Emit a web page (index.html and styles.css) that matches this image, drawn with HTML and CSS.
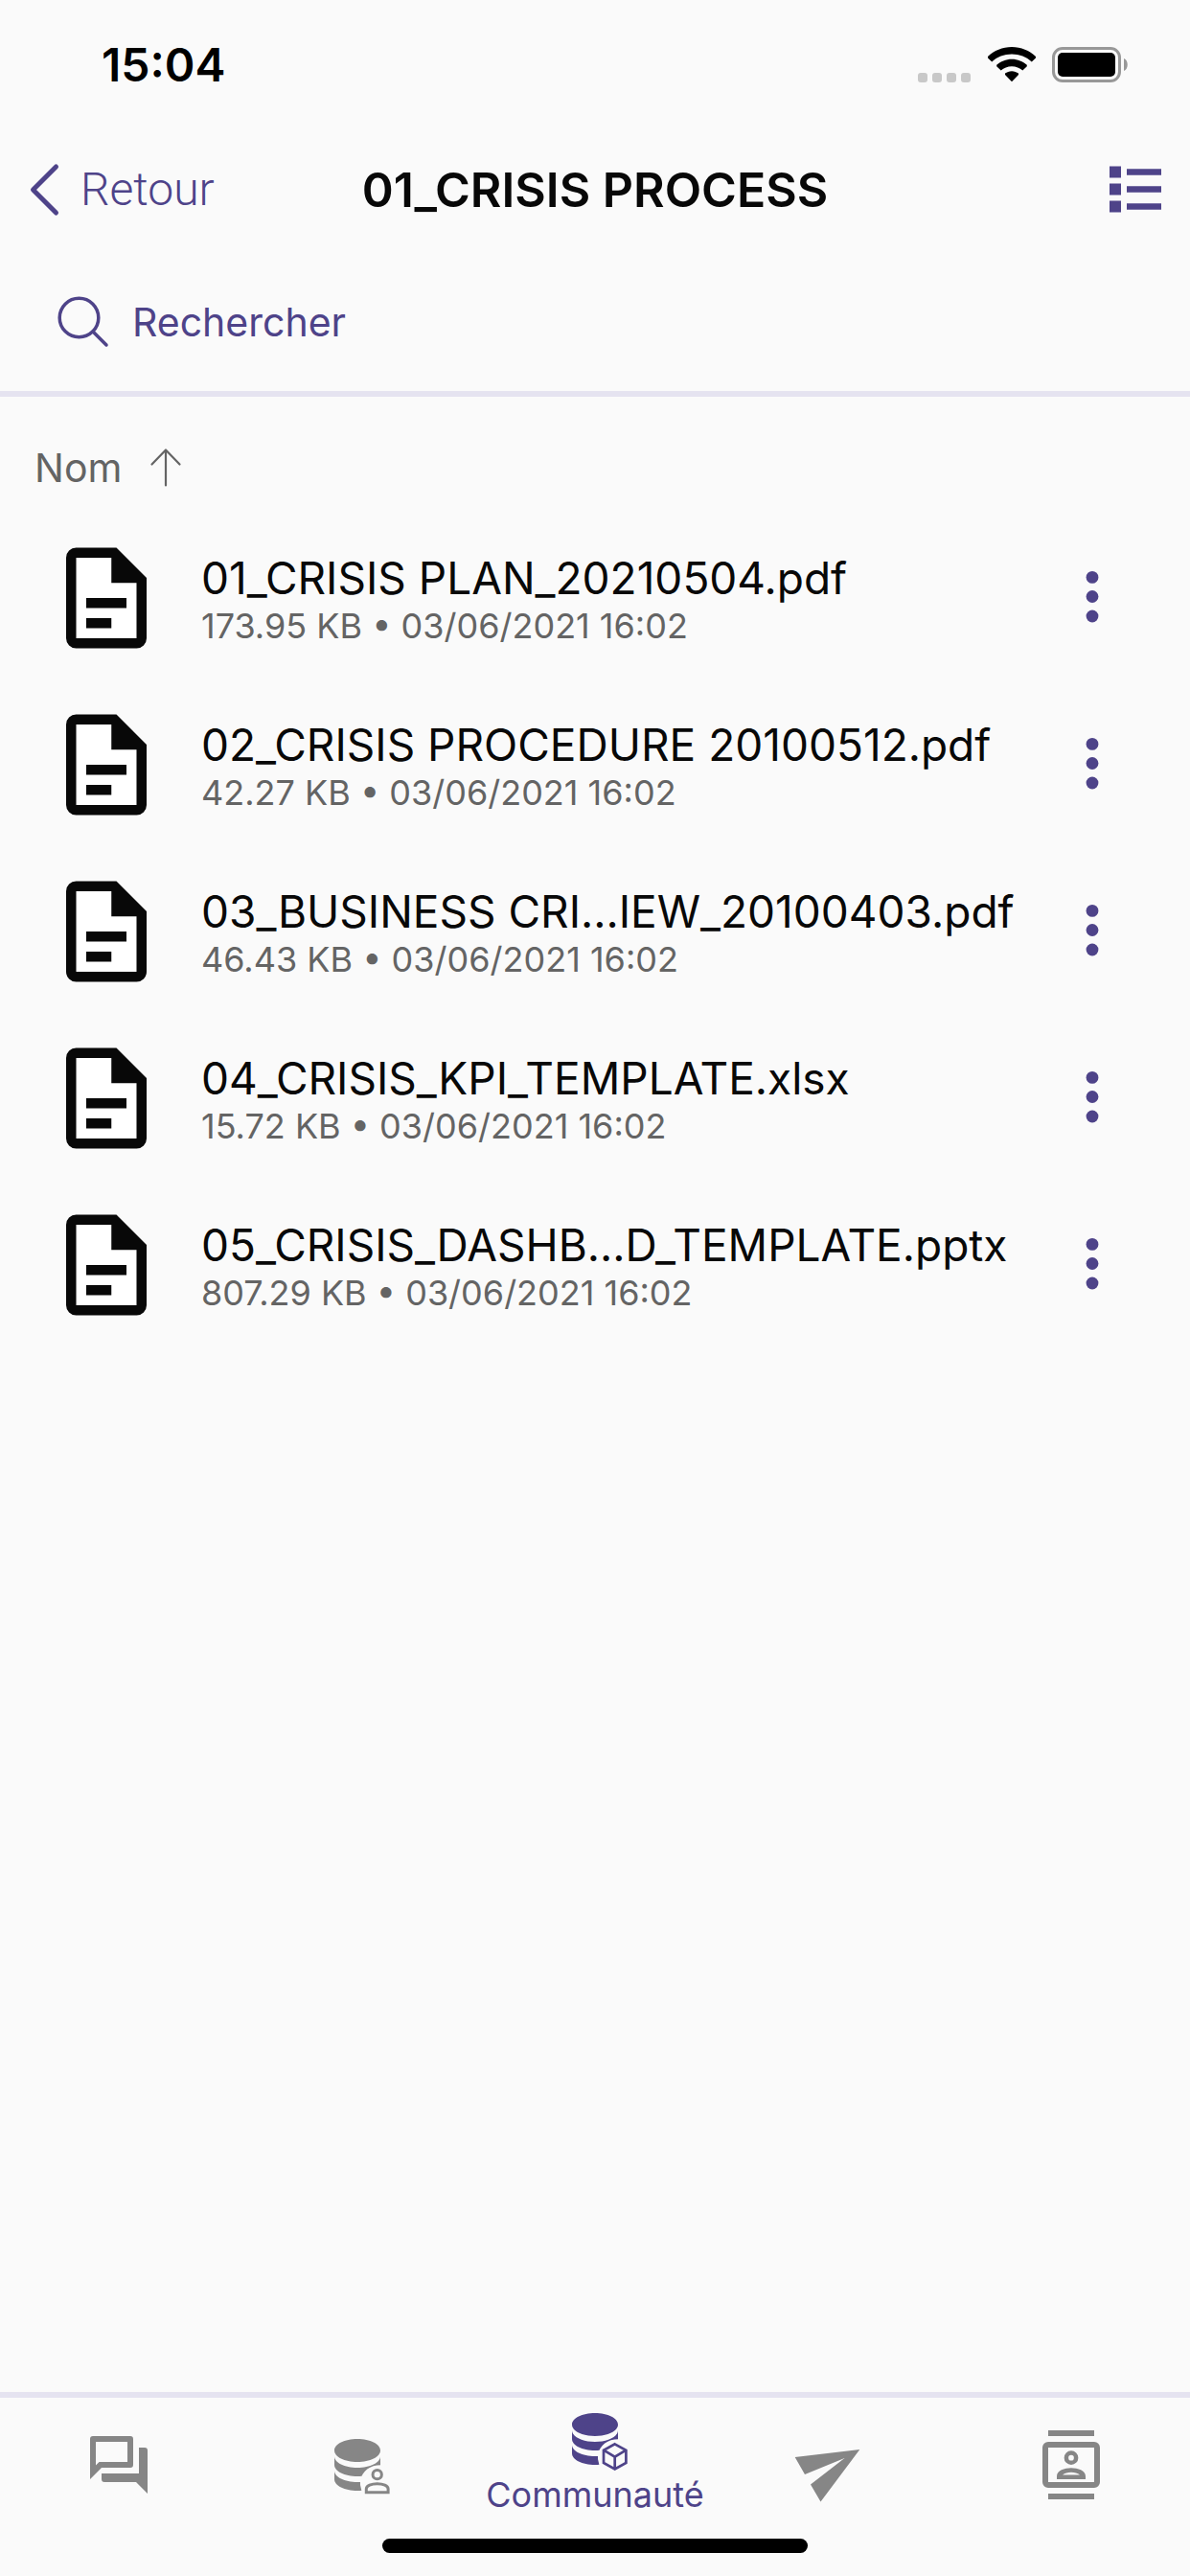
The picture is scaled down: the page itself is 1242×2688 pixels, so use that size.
FILE: index.html
```html
<!DOCTYPE html>
<html lang="fr">
<head>
<meta charset="utf-8">
<meta name="viewport" content="width=device-width, initial-scale=1">
<title>01_CRISIS PROCESS</title>
<link rel="stylesheet" href="styles.css">
</head>
<body>
<svg class="defs" aria-hidden="true">
  <symbol id="file" viewBox="0 0 24 24">
    <path fill="#fff" d="M6 4h8l4 4v12H6z"/>
    <path fill-rule="evenodd" d="M6 2A2 2 0 0 0 4 4V20A2 2 0 0 0 6 22H18A2 2 0 0 0 20 20V8L14 2ZM6 4H13V9H18V20H6ZM8 12V14H16V12ZM8 16V18H13V16Z"/>
  </symbol>
  <symbol id="more" viewBox="0 0 14 56">
    <circle cx="7" cy="6.400" r="6.400"/><circle cx="7" cy="26.500" r="6.400"/><circle cx="7" cy="47" r="6.400"/>
  </symbol>
  <symbol id="database" viewBox="0 0 24 24">
    <path d="M12 3C7.58 3 4 4.79 4 7s3.58 4 8 4 8-1.79 8-4-3.58-4-8-4M4 9v3c0 2.21 3.58 4 8 4s8-1.79 8-4V9c0 2.21-3.58 4-8 4s-8-1.79-8-4m0 5v3c0 2.21 3.58 4 8 4s8-1.79 8-4v-3c0 2.21-3.58 4-8 4s-8-1.79-8-4Z"/>
    <path fill="#fafafa" d="M20.5 12.1C16.5 12 13.7 14 13 17.6V19l.7 3H22V12.1Z"/>
  </symbol>
</svg>

<div class="status">
  <time>15:04</time>
  <div class="status-icons">
    <svg width="56" height="10" viewBox="0 0 56 10" class="signal" aria-hidden="true"><rect width="10" height="10" rx="3"/><rect x="15" width="10" height="10" rx="3"/><rect x="30" width="10" height="10" rx="3"/><rect x="45" width="10" height="10" rx="3"/></svg>
    <svg width="50" height="37" viewBox="0 0 50 37" aria-hidden="true"><path d="M25 0C15.300 0 6.500 3.800 0 10l0 1.400 4.200 4.200C9.600 10.300 17 7.600 25 7.600s15.400 2.700 20.800 8L50 11.400V10C43.500 3.800 34.700 0 25 0ZM25 12.700c-6.100 0-11.600 2.300-15.800 6.100v1.400l4.500 4.400c3-2.700 6.900-4.400 11.300-4.400s8.300 1.700 11.300 4.400l4.500-4.400v-1.400C36.600 15 31.100 12.700 25 12.700ZM25 25.200c-2.700 0-5.100.9-7 2.400v1.300l7 7.400 7-7.400v-1.300c-1.900-1.500-4.300-2.400-7-2.400Z"/></svg>
    <svg width="80" height="37" viewBox="0 0 80 37" aria-hidden="true"><rect x="1.500" y="1.500" width="69" height="34" rx="9.500" fill="none" stroke="#989898" stroke-width="3"/><rect x="6" y="6" width="60" height="25" rx="5"/><path fill="#989898" d="M75 12c5 2 5 11 0 13Z"/></svg>
  </div>
</div>

<header class="topbar">
  <a class="back" href="#"><svg width="32" height="54" viewBox="0 0 32 54" aria-hidden="true"><path fill="none" stroke="currentColor" stroke-width="5" stroke-linecap="round" stroke-linejoin="round" d="M28.500 3 4.500 27l24 24"/></svg>Retour</a>
  <h1>01_CRISIS PROCESS</h1>
  <button class="view" aria-label="Affichage"><svg width="54" height="50" viewBox="0 0 54 50" aria-hidden="true"><path d="M0 .5h12v12H0zM0 18.500h12v12H0zM0 36.500h12v12H0zM18 3.300h36v6.400H18zM18 21.300h36v6.400H18zM18 39.300h36v6.400H18z"/></svg></button>
</header>

<label class="search">
  <svg width="54" height="54" viewBox="0 0 54 54" aria-hidden="true"><g fill="none" stroke="currentColor" stroke-width="3.500" stroke-linecap="round"><circle cx="22.500" cy="22.500" r="20.300"/><path d="M37 37 51 51"/></g></svg>
  <input type="search" placeholder="Rechercher" aria-label="Rechercher">
</label>

<main>
  <button class="sort">Nom<svg width="32" height="40" viewBox="0 0 32 40" aria-hidden="true"><path fill="none" stroke="currentColor" stroke-width="2.200" stroke-linecap="round" stroke-linejoin="round" d="M16 38.500V2M1.500 16.500 16 1.500l14.500 15"/></svg></button>
  <ul class="files">
    <li><svg class="file-icon" aria-hidden="true"><use href="#file"/></svg><div class="info"><span class="name">01_CRISIS PLAN_20210504.pdf</span><span class="meta">173.95 KB • 03/06/2021 16:02</span></div><button class="more" aria-label="Options"><svg width="14" height="56"><use href="#more"/></svg></button></li>
    <li><svg class="file-icon" aria-hidden="true"><use href="#file"/></svg><div class="info"><span class="name">02_CRISIS PROCEDURE 20100512.pdf</span><span class="meta">42.27 KB • 03/06/2021 16:02</span></div><button class="more" aria-label="Options"><svg width="14" height="56"><use href="#more"/></svg></button></li>
    <li><svg class="file-icon" aria-hidden="true"><use href="#file"/></svg><div class="info"><span class="name">03_BUSINESS CRI…IEW_20100403.pdf</span><span class="meta">46.43 KB • 03/06/2021 16:02</span></div><button class="more" aria-label="Options"><svg width="14" height="56"><use href="#more"/></svg></button></li>
    <li><svg class="file-icon" aria-hidden="true"><use href="#file"/></svg><div class="info"><span class="name">04_CRISIS_KPI_TEMPLATE.xlsx</span><span class="meta">15.72 KB • 03/06/2021 16:02</span></div><button class="more" aria-label="Options"><svg width="14" height="56"><use href="#more"/></svg></button></li>
    <li><svg class="file-icon" aria-hidden="true"><use href="#file"/></svg><div class="info"><span class="name">05_CRISIS_DASHB…D_TEMPLATE.pptx</span><span class="meta">807.29 KB • 03/06/2021 16:02</span></div><button class="more" aria-label="Options"><svg width="14" height="56"><use href="#more"/></svg></button></li>
  </ul>
</main>

<footer>
  <nav>
    <a href="#" aria-label="Messages"><svg viewBox="0 0 24 24"><path d="M15 4v7H5.170L4 12.170V4h11m1-2H3a1 1 0 0 0-1 1v14l4-4h10a1 1 0 0 0 1-1V3a1 1 0 0 0-1-1m5 4h-2v9H6v2a1 1 0 0 0 1 1h11l4 4V7a1 1 0 0 0-1-1Z"/></svg></a>
    <a href="#" aria-label="Personnel"><svg viewBox="0 0 24 24"><use href="#database"/><g fill="none" stroke="currentColor" stroke-width="1"><circle cx="18.900" cy="15.400" r="1.550"/><path d="M15.100 21.600v-1.300c0-1.100 1.800-1.750 3.800-1.750s3.800.65 3.800 1.750v1.300Z"/></g></svg></a>
    <a href="#" class="active" aria-current="page"><svg viewBox="0 0 24 24"><use href="#database"/><path fill="none" stroke="currentColor" stroke-width=".9" stroke-linejoin="miter" d="M18.900 13.800l3.900 2.100v4.400l-3.900 2.200-3.900-2.200v-4.400ZM15 15.900l3.900 2.300 3.900-2.300M18.900 18.200v4.300"/></svg><span>Communauté</span></a>
    <a href="#" aria-label="Envois"><svg viewBox="0 0 72 72"><path d="M-3.300 28 64.300 20 23.500 74.500 13 56.500 48.500 29 7 46Z"/></svg></a>
    <a href="#" aria-label="Contacts"><svg viewBox="0 0 24 24"><path fill-rule="evenodd" d="M4 0h16v2H4zM4 22h16v2H4zM4 4h16a2 2 0 0 1 2 2v12a2 2 0 0 1-2 2H4a2 2 0 0 1-2-2V6a2 2 0 0 1 2-2Zm0 2v12h16V6ZM12 7.100a2.450 2.450 0 1 1 0 4.900 2.450 2.450 0 0 1 0-4.900Zm0 1.500a.95.95 0 1 0 0 1.900.95.950 0 0 0 0-1.900ZM7 17v-1c0-2 2.700-2.900 5-2.900s5 .9 5 2.900v1Zm2-1.500h6c-.7-.6-1.900-.9-3-.9s-2.300.3-3 .9Z"/></svg></a>
  </nav>
  <div class="home"></div>
</footer>
</body>
</html>
```

FILE: styles.css
```css
* { box-sizing: border-box; }

body {
  margin: 0;
  min-height: 100vh;
  display: flex;
  flex-direction: column;
  background: #fafafa;
  color: #080808;
  font-family: Inter, "Liberation Sans", sans-serif;
}

svg { display: block; flex: none; fill: currentColor; overflow: visible; }
button { border: 0; padding: 0; background: none; font: inherit; color: inherit; }
a { color: inherit; text-decoration: none; }
.defs { position: absolute; width: 0; height: 0; }

.status {
  display: flex;
  justify-content: space-between;
  padding: 36px 64px 32px 106px;
  color: #000;
}
.status time { font-size: 48px; line-height: 64px; font-weight: 600; }
.status-icons { display: flex; align-items: flex-end; gap: 17px; padding-bottom: 14px; }
.signal { fill: #c8c8c8; }

.topbar {
  display: grid;
  grid-template-columns: 1fr auto 1fr;
  align-items: center;
  height: 132px;
  padding: 0 30px;
}
.back {
  display: flex;
  align-items: center;
  gap: 22px;
  font-family: Roboto, sans-serif;
  font-size: 48px;
  line-height: 54px;
  font-weight: 300;
  color: #4e4389;
}
h1 { margin: 0; font-size: 50px; line-height: 60px; font-weight: 600; }
.view { justify-self: end; color: #4e4389; }

.search {
  display: flex;
  align-items: center;
  gap: 24px;
  height: 150px;
  padding: 0 60px;
  border-bottom: 6px solid #e5e3f0;
  color: #4e4389;
}
.search input {
  flex: 1;
  min-width: 0;
  border: 0;
  padding: 0;
  outline: 0;
  background: none;
  font: inherit;
  font-size: 41px;
  line-height: 54px;
  color: inherit;
  appearance: none;
}
.search input::placeholder { color: #4e4389; opacity: 1; }

main { flex: 1; }
.sort {
  display: flex;
  align-items: center;
  gap: 30px;
  height: 123px;
  padding: 24px 36px 0;
  font-size: 41px;
  color: #646464;
}

.files { list-style: none; margin: 0; padding: 0; }
.files li {
  display: flex;
  align-items: center;
  height: 174px;
  padding: 0 72px 0 48px;
}
.file-icon { width: 126px; height: 126px; }
.info { flex: 1; min-width: 0; display: flex; flex-direction: column; padding: 2px 0 0 36px; }
.name { font-size: 46px; line-height: 56px; white-space: nowrap; }
.meta { font-size: 36px; line-height: 44px; color: #646464; white-space: nowrap; }
.more { width: 60px; height: 80px; display: grid; place-items: center; color: #4e4389; }

footer { border-top: 6px solid #e5e3f0; padding-bottom: 24px; }
nav { display: flex; height: 140px; margin-bottom: 7px; color: #868686; }
nav a {
  flex: 1 1 0;
  display: flex;
  flex-direction: column;
  align-items: center;
  justify-content: center;
}
nav svg { width: 72px; height: 72px; }
nav .active { color: #4e4389; padding-bottom: 10px; }
nav span { font-size: 36px; line-height: 44px; }
.home { width: 444px; height: 15px; margin: 0 auto; border-radius: 8px; background: #000; }
```
